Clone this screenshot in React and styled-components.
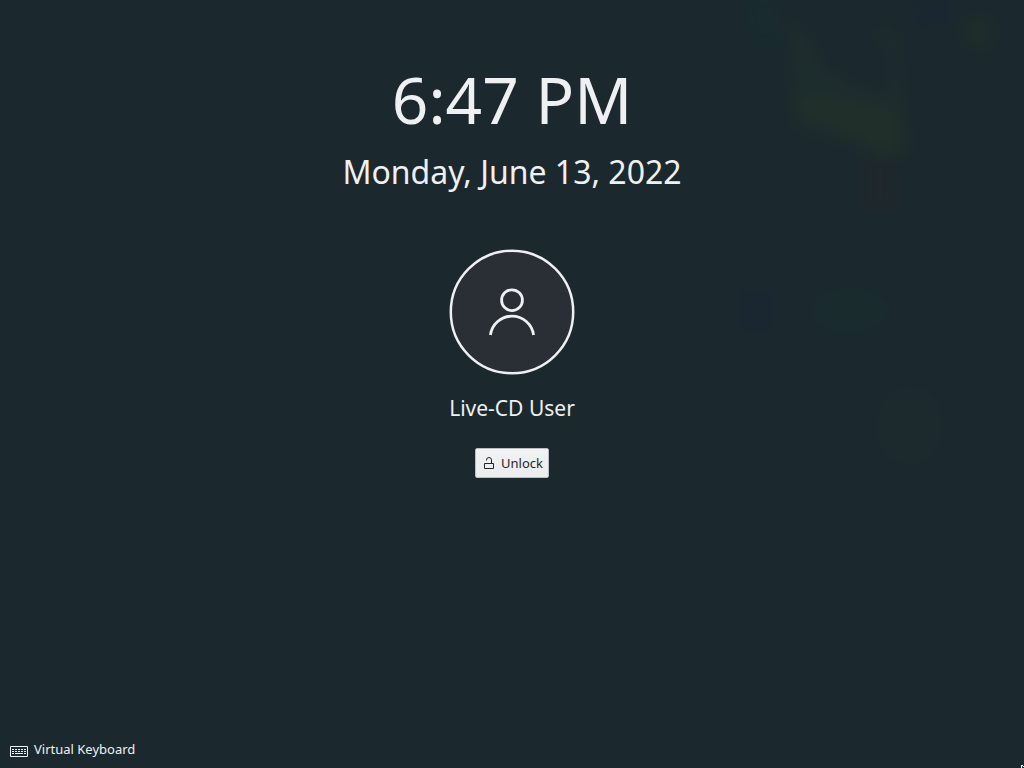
import React from "react";
import styled, { createGlobalStyle } from "styled-components";

const GlobalStyle = createGlobalStyle`
  *, *::before, *::after { box-sizing: border-box; }
  body {
    margin: 0;
    background: #1b282e;
    color: #eff0f1;
    font-family: "Noto Sans", sans-serif;
  }
`;

const Screen = styled.div`
  position: relative;
  display: flex;
  flex-direction: column;
  min-height: 100vh;
  overflow: hidden;
  background: #1b282e;
`;

const Wallpaper = styled.svg`
  position: absolute;
  top: 0;
  right: 0;
  pointer-events: none;
`;

const Main = styled.main`
  position: relative;
  flex: 1;
  display: flex;
  flex-direction: column;
  align-items: center;
  padding-top: 56px;
`;

const Time = styled.time`
  font-size: 64px;
  line-height: 88px;
`;

const DateLine = styled.time`
  margin-top: 6px;
  font-size: 32px;
  line-height: 44px;
`;

const Avatar = styled.svg`
  margin-top: 55px;
`;

const UserName = styled.h1`
  margin: 18px 0 0;
  font-size: 21px;
  font-weight: 400;
  line-height: 30px;
`;

const UnlockButton = styled.button`
  display: flex;
  align-items: center;
  gap: 4px;
  height: 30px;
  margin-top: 25px;
  padding: 0 5px;
  border: 1px solid #bcbebf;
  border-radius: 2px;
  background: linear-gradient(#f1f2f3, #ebecee);
  color: #232629;
  font: 13px/18px "Noto Sans", sans-serif;
`;

const Footer = styled.footer`
  position: relative;
  display: flex;
  padding: 0 10px 9px;
`;

const KeyboardButton = styled.button`
  display: flex;
  align-items: center;
  gap: 6px;
  padding: 0;
  border: 0;
  background: none;
  color: #eff0f1;
  font: 13px/20px "Noto Sans", sans-serif;
`;

const KeyboardGlyph = styled.svg`
  margin-top: 5px;
`;

const Pointer = styled.svg`
  position: absolute;
  right: 0;
  bottom: 0;
`;

function WallpaperGlow() {
  return (
    <Wallpaper width="424" height="768" viewBox="600 0 424 768" aria-hidden="true">
      <defs>
        <filter id="soft" filterUnits="userSpaceOnUse" x="560" y="-40" width="504" height="848" colorInterpolationFilters="sRGB">
          <feGaussianBlur stdDeviation="8" />
        </filter>
      </defs>
      <g filter="url(#soft)">
        <rect x="540" y="-60" width="544" height="888" fill="#1b282e" />
        <path d="M786 20l24 12 16 34 30 20 30 12 6-40-24-30 30 4 12 120-30-2-50-26-38-14z" fill="#1d2c2c" />
        <path d="M796 92l50 2 52 14 4 46-24 0-40-18-40-12z" fill="#202f29" />
        <circle cx="977" cy="32" r="15" fill="#1f2d2a" />
        <path d="M744 0h36v40l-24 4z" fill="#192b2f" />
        <path d="M910 0h38v22l-30 4z" fill="#1a2730" />
        <rect x="866" y="160" width="26" height="48" fill="#1f282c" />
        <rect x="740" y="290" width="34" height="40" fill="#1a2730" />
        <ellipse cx="850" cy="310" rx="40" ry="22" fill="#1a2b2e" />
        <ellipse cx="910" cy="425" rx="34" ry="40" fill="#1c292d" />
      </g>
    </Wallpaper>
  );
}

function LockIcon() {
  return (
    <svg width="16" height="16" viewBox="0 0 16 16" fill="none" stroke="#232629" aria-hidden="true">
      <path d="M3.5 8.500h9v5h-9z" />
      <path d="M5.500 5.500V5a2.500 2.500 0 0 1 5 0v3.500" />
    </svg>
  );
}

function KeyboardIcon() {
  return (
    <KeyboardGlyph width="18" height="11" viewBox="0 0 18 11" fill="none" stroke="#eff0f1" aria-hidden="true">
      <path d="M.5.5h17v10H.5z" />
      <path d="M2 3.500h14M2 5.500h14" strokeDasharray="2 1" />
      <path d="M2 7.500h2M5 7.500h8M14 7.500h2" />
    </KeyboardGlyph>
  );
}

export default function App() {
  return (
    <>
      <GlobalStyle />
      <Screen>
        <WallpaperGlow />
        <Main>
          <Time dateTime="18:47">6:47 PM</Time>
          <DateLine dateTime="2022-06-13">Monday, June 13, 2022</DateLine>
          <Avatar width="126" height="126" viewBox="0 0 126 126" fill="none" stroke="#eff0f1" strokeWidth="2.500" role="img" aria-label="User avatar">
            <circle cx="63" cy="63" r="61.200" fill="#2a2f36" />
            <circle cx="63" cy="51.200" r="10.400" strokeWidth="2.800" />
            <path d="M41.400 86a21.800 21.800 0 0 1 43.200 0" strokeWidth="2.800" />
          </Avatar>
          <UserName>Live-CD User</UserName>
          <UnlockButton type="button">
            <LockIcon />
            Unlock
          </UnlockButton>
        </Main>
        <Footer>
          <KeyboardButton type="button">
            <KeyboardIcon />
            Virtual Keyboard
          </KeyboardButton>
        </Footer>
        <Pointer width="3" height="3" viewBox="0 0 3 3" aria-hidden="true">
          <path d="M0 0h2v1h1v1H1v1H0z" fill="#eff0f1" />
          <path d="M1 1h1v1H1z" fill="#4b5359" />
        </Pointer>
      </Screen>
    </>
  );
}
